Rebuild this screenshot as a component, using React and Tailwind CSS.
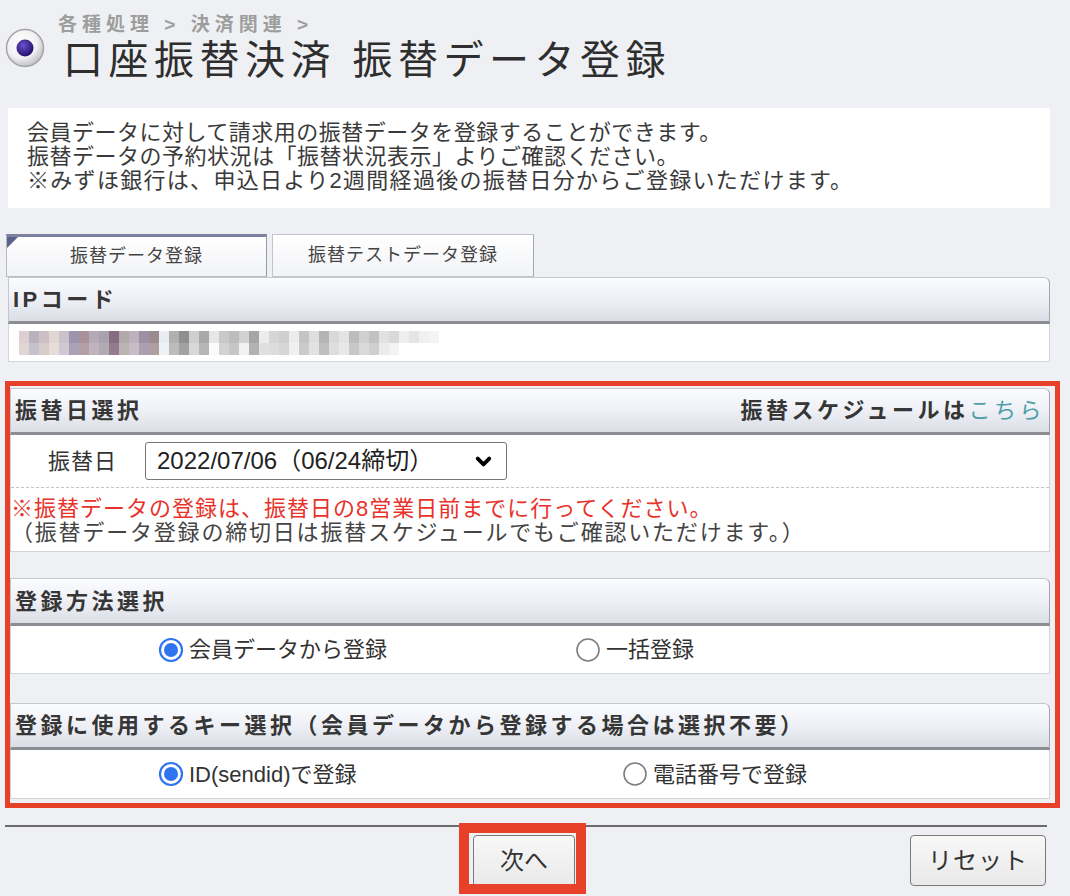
import { ChevronDown } from 'lucide-react';

// pixelated (masked) IP code value, one colour per 10px cell
const MASK_TOP = [
  '#dccfd0', '#b9b1bd', '#cdbfc4', '#e2d6d2', '#c9c2ca', '#9c95ad', '#a8929a', '#b4a9b6', '#a8a2ad', '#866c80',
  '#b1a9a9', '#beb1bc', '#9c90a4', '#9b8a8e', '#e9edf2', '#b0b0b0', '#8f8f8f', '#cfcfcf', '#a9a9a9', '#e6e6e6',
  '#c9c9c9', '#bdbdbd', '#d2d2d2', '#a5a5a5', '#ececec', '#d6d6d6', '#cfcfcf', '#ececec', '#c4c4c4', '#dedede',
  '#b4b4b4', '#d9d9d9', '#e4e4e4', '#bcbcbc', '#d0d0d0', '#c2c2c2', '#e1e1e1', '#d8d8d8', '#eeeeee', '#e5e5e5',
  '#f0f0f0', '#f4f4f4',
];
const MASK_BOTTOM = [
  '#e0d6d4', '#c6c2cc', '#d8ccca', '#e6dcd8', '#cfcad2', '#aaa2b6', '#b49ea6', '#c0b4bf', '#b2abb6', '#937c8e',
  '#bcb4b4', '#c8bdc6', '#ab9fb1', '#b09fa2', '#eef1f5', '#bcbcbc', '#a2a2a2', '#d8d8d8', '#b6b6b6', '#fbfbfb',
  '#d2d2d2', '#c6c6c6', '#f2f2f2', '#b2b2b2', '#e0e0e0', '#dddddd', '#d6d6d6', '#f0f0f0', '#cbcbcb', '#e2e2e2',
  '#bfbfbf', '#dedede', '#e8e8e8', '#c8c8c8', '#dadada', '#cfcfcf', '#ebebeb', '#f3f3f3',
];

const Bullet = () => (
  <svg width="40" height="40" viewBox="0 0 40 40" className="mt-[15px] -ml-[3px] shrink-0">
    <defs>
      <radialGradient id="ball" cx="40%" cy="35%" r="70%">
        <stop offset="0%" stopColor="#ffffff" />
        <stop offset="60%" stopColor="#f1f1f3" />
        <stop offset="100%" stopColor="#b9b9bf" />
      </radialGradient>
      <radialGradient id="dot" cx="40%" cy="35%" r="70%">
        <stop offset="0%" stopColor="#6a52c8" />
        <stop offset="100%" stopColor="#1c0b66" />
      </radialGradient>
    </defs>
    <circle cx="20" cy="20" r="18.5" fill="url(#ball)" stroke="#a3a3aa" strokeWidth="1.5" />
    <circle cx="20" cy="20" r="8.5" fill="url(#dot)" />
  </svg>
);

const SectionHeader = ({ children, right, className = '' }) => (
  <div
    className={`flex items-center rounded-tr-[6px] border border-[#c6c7cd] border-r-[#a3a4aa] border-b-[3px] border-b-[#8c8d92] bg-gradient-to-b from-[#fbfcff] via-[#eef0f6] to-[#dcdee6] pl-[4px] pr-[4px] text-[22px] font-bold tracking-[3.5px] text-[#363636] ${className}`}
  >
    <span>{children}</span>
    {right && <span className="ml-auto">{right}</span>}
  </div>
);

const Radio = ({ checked, label }) => (
  <label className="flex items-center gap-[5px] text-[22px] text-[#333]">
    <svg width="26" height="26" viewBox="0 0 26 26" className="shrink-0">
      {checked ? (
        <>
          <circle cx="13" cy="13" r="11" fill="#fff" stroke="#2f74ee" strokeWidth="2.2" />
          <circle cx="13" cy="13" r="7" fill="#2f74ee" />
        </>
      ) : (
        <circle cx="13" cy="13" r="11" fill="#fff" stroke="#7d7d7d" strokeWidth="1.6" />
      )}
    </svg>
    {label}
  </label>
);

export default function App() {
  return (
    <div className="relative min-h-[896px] overflow-hidden bg-[#eff0f4] pt-[13px] pl-2 pr-5 font-['Liberation_Sans','Noto_Sans_CJK_JP',sans-serif] text-[#333]">
      {/* page title */}
      <div className="flex items-start">
        <Bullet />
        <div className="ml-[13px]">
          <p className="h-[23px] text-[19px] leading-[23px] font-bold tracking-[5px] text-[#9d9d9d]">
            各種処理 &gt; 決済関連 &gt;
          </p>
          <h1 className="ml-[5px] text-[40px] leading-[48px] tracking-[5.5px] text-[#2e2e2e]">
            口座振替決済 振替データ登録
          </h1>
        </div>
      </div>

      {/* description */}
      <div className="mt-[24px] bg-white pl-[19px] pt-[13px] pb-[15px] text-[22px] leading-[24px] tracking-[0.5px] text-[#3a3a3a]">
        <p>会員データに対して請求用の振替データを登録することができます。</p>
        <p>振替データの予約状況は「振替状況表示」よりご確認ください。</p>
        <p className="tracking-[1.3px]">※みずほ銀行は、申込日より2週間経過後の振替日分からご登録いただけます。</p>
      </div>

      {/* tabs */}
      <div className="mt-[26px] -ml-[2px] flex gap-[5px]">
        <div className="relative flex h-[43px] w-[261px] items-center justify-center border border-[#b9bac0] border-r-[#9a9ba0] border-t-[3px] border-t-[#7c819f] bg-gradient-to-b from-white to-[#f2f3f6] text-[18px] tracking-[1px] text-[#444]">
          <span className="absolute left-0 top-0 h-0 w-0 border-t-[11px] border-r-[11px] border-t-[#5c628e] border-r-transparent" />
          振替データ登録
        </div>
        <div className="flex h-[43px] w-[262px] items-center justify-center border border-[#c3c4c9] border-r-[#a6a7ac] bg-gradient-to-b from-white to-[#f2f3f6] text-[18px] tracking-[1px] text-[#444]">
          振替テストデータ登録
        </div>
      </div>

      {/* IP code */}
      <SectionHeader className="h-[47px]">IPコード</SectionHeader>
      <div className="flex h-[38px] items-center border-x border-b border-[#d3d4d9] bg-white pl-[10px]">
        <div className="blur-[0.6px]">
          <div className="flex">
            {MASK_TOP.map((c, i) => (
              <span key={i} className="h-[12px] w-[10px]" style={{ backgroundColor: c }} />
            ))}
          </div>
          <div className="flex">
            {MASK_BOTTOM.map((c, i) => (
              <span key={i} className="h-[12px] w-[10px]" style={{ backgroundColor: c }} />
            ))}
          </div>
        </div>
      </div>

      {/* registration settings */}
      <div className="mt-[19px] -ml-[3px] -mr-[10px] border-[5px] border-[#e8412a] pt-[2px] pr-[5px] pb-[4px]">
        <SectionHeader
          className="h-[47px]"
          right={
            <>
              振替スケジュールは<span className="font-normal text-[#4f9ea8]">こちら</span>
            </>
          }
        >
          振替日選択
        </SectionHeader>
        <div className="border-x border-b border-[#d3d4d9] bg-white">
          <div className="flex h-[53px] items-center border-b border-dashed border-[#c4c4c4] pl-[37px] text-[22px]">
            <span className="tracking-[1px]">振替日</span>
            <div className="ml-[28px] flex h-[38px] w-[362px] items-center justify-between rounded-[3px] border border-[#767676] bg-white pl-[11px] pr-[11px] text-[24px] text-[#222]">
              <span>2022/07/06（06/24締切）</span>
              <ChevronDown size={23} strokeWidth={4} className="text-black" />
            </div>
          </div>
          <div className="pt-[9px] pb-[6px] text-[22px] leading-[24px] tracking-[1px]">
            <p className="text-[#e8322a]">※振替データの登録は、振替日の8営業日前までに行ってください。</p>
            <p className="tracking-[1.8px] text-[#444]">（振替データ登録の締切日は振替スケジュールでもご確認いただけます。）</p>
          </div>
        </div>

        <SectionHeader className="mt-[26px] h-[48px]">登録方法選択</SectionHeader>
        <div className="flex h-[48px] items-center border-x border-b border-[#d3d4d9] bg-white pl-[147px]">
          <div className="w-[417px]">
            <Radio checked label="会員データから登録" />
          </div>
          <Radio label="一括登録" />
        </div>

        <SectionHeader className="mt-[29px] h-[47px]">
          登録に使用するキー選択（会員データから登録する場合は選択不要）
        </SectionHeader>
        <div className="flex h-[49px] items-center border-x border-b border-[#d3d4d9] bg-white pl-[147px]">
          <div className="w-[464px]">
            <Radio checked label="ID(sendid)で登録" />
          </div>
          <Radio label="電話番号で登録" />
        </div>
      </div>

      {/* actions */}
      <div className="mt-[17px] -ml-[3px] mr-[3px] h-[2px] bg-[#6b6b6b]" />
      <div className="mt-[8px] flex items-start">
        <div className="relative ml-[465px]">
          <button className="h-[52px] w-[102px] rounded-[4px] border border-[#7a7a7a] bg-gradient-to-b from-[#f8f8f8] to-[#e9e9e9] text-[24px] text-[#333]">
            次へ
          </button>
          <span className="pointer-events-none absolute -left-[14px] -top-[12px] h-[71px] w-[127px] border-[10px] border-[#e8412a]" />
        </div>
        <button className="ml-auto mr-[4px] h-[51px] w-[136px] rounded-[4px] border border-[#7a7a7a] bg-gradient-to-b from-[#f8f8f8] to-[#e9e9e9] text-[24px] tracking-[1px] text-[#333]">
          リセット
        </button>
      </div>
    </div>
  );
}
